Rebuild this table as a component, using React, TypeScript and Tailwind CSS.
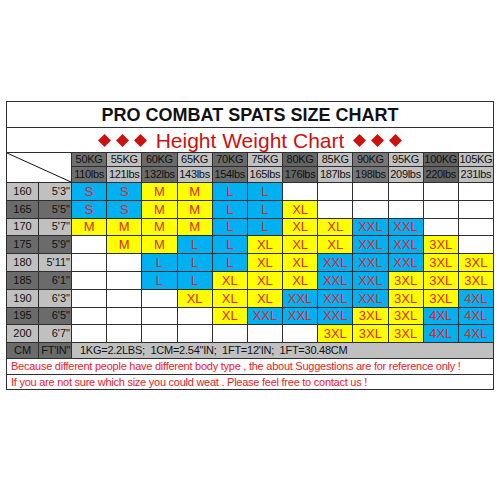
import React from 'react';

const weights = [
  ['50KG', '110lbs'],
  ['55KG', '121lbs'],
  ['60KG', '132lbs'],
  ['65KG', '143lbs'],
  ['70KG', '154lbs'],
  ['75KG', '165lbs'],
  ['80KG', '176lbs'],
  ['85KG', '187lbs'],
  ['90KG', '198lbs'],
  ['95KG', '209lbs'],
  ['100KG', '220lbs'],
  ['105KG', '231lbs'],
];

// header shade per weight column
const headShade = [
  'bg-[#6e6e6e]', 'bg-[#c0c0c0]', 'bg-[#6a6a6a]', 'bg-[#c0c0c0]',
  'bg-[#6a6a6a]', 'bg-[#c0c0c0]', 'bg-[#646464]', 'bg-[#c0c0c0]',
  'bg-[#767676]', 'bg-[#c0c0c0]', 'bg-[#626262]', 'bg-[#c0c0c0]',
];

const sizeRows: [string, string, string][] = [
  ['160', `5'3"`, 'S S M M L L - - - - - -'],
  ['165', `5'5"`, 'S S M M L L XL - - - - -'],
  ['170', `5'7"`, 'M M M M L L XL XL XXL XXL - -'],
  ['175', `5'9"`, '- M M L L XL XL XL XXL XXL 3XL -'],
  ['180', `5'11"`, '- - L L L XL XL XXL XXL XXL 3XL 3XL'],
  ['185', `6'1"`, '- - L L XL XL XL XXL XXL 3XL 3XL 3XL'],
  ['190', `6'3"`, '- - - XL XL XL XXL XXL XXL 3XL 3XL 4XL'],
  ['195', `6'5"`, '- - - - XL XXL XXL XXL 3XL 3XL 4XL 4XL'],
  ['200', `6'7"`, '- - - - - - - 3XL 3XL 3XL 4XL 4XL'],
];

const blue = ['S', 'L', 'XXL', '4XL'];

function Diamonds() {
  return (
    <div className="flex items-center gap-[5px]">
      {[0, 1, 2].map((i) => (
        <svg key={i} width="13" height="13" viewBox="0 0 13 13">
          <path d="M6.5 0 L13 6.5 L6.5 13 L0 6.5 Z" fill="#cc1111" />
        </svg>
      ))}
    </div>
  );
}

export default function App() {
  return (
    <div className="w-[500px] h-[500px] bg-white pt-[101px] pl-[6px]" style={{ fontFamily: '"Liberation Sans", Arial, sans-serif' }}>
      <div className="w-[488px] grid grid-cols-[31px_32px_repeat(12,minmax(0,1fr))] grid-rows-[25px_24px_13px_15px_repeat(9,16.8px)_15px_15px_14px] gap-px bg-[#2e2e2e] border border-[#2e2e2e] text-[#111]">
        {/* Title */}
        <div className="col-span-14 bg-white flex items-center justify-center text-[18px] font-bold leading-none">
          PRO COMBAT SPATS SIZE CHART
        </div>

        {/* Subtitle */}
        <div className="col-span-14 bg-white flex items-center justify-center gap-[9px] text-[#cc1111] leading-none">
          <Diamonds />
          <span className="text-[21px]">Height Weight Chart</span>
          <Diamonds />
        </div>

        {/* Corner cell with diagonal */}
        <div className="col-span-2 row-span-2 bg-white relative">
          <svg className="absolute inset-0 w-full h-full" viewBox="0 0 100 100" preserveAspectRatio="none">
            <line x1="0" y1="0" x2="100" y2="100" stroke="#111" strokeWidth="1" vectorEffect="non-scaling-stroke" />
          </svg>
        </div>

        {weights.map(([kg], i) => (
          <div key={kg} className={`${headShade[i]} flex items-center justify-center text-[11px] tracking-[-0.3px] leading-none whitespace-nowrap`}>
            {kg}
          </div>
        ))}
        {weights.map(([kg, lbs], i) => (
          <div key={kg + lbs} className={`${headShade[i]} flex items-center justify-center text-[11px] tracking-[-0.3px] leading-none whitespace-nowrap`}>
            {lbs}
          </div>
        ))}

        {/* Size rows */}
        {sizeRows.map(([cm, ft, sizes], r) => {
          const shade = r % 2 === 0 ? 'bg-[#c0c0c0]' : 'bg-[#6b6b6b]';
          return (
            <React.Fragment key={cm}>
              <div className={`${shade} flex items-center justify-center text-[11px] leading-none`}>{cm}</div>
              <div className={`${shade} flex items-center justify-end pr-px text-[11px] leading-none`}>{ft}</div>
              {sizes.split(' ').map((s, c) => (
                <div
                  key={c}
                  className={`flex items-center justify-center text-[13px] leading-none text-[#e0262e] ${
                    s === '-' ? 'bg-white' : blue.includes(s) ? 'bg-[#00b0f0]' : 'bg-[#ffff00]'
                  }`}
                >
                  {s === '-' ? '' : s}
                </div>
              ))}
            </React.Fragment>
          );
        })}

        {/* Conversion row */}
        <div className="bg-[#6b6b6b] flex items-center justify-center text-[11px] leading-none">CM</div>
        <div className="bg-[#6b6b6b] flex items-center justify-end pr-px text-[11px] tracking-[-0.3px] leading-none whitespace-nowrap">FT'IN"</div>
        <div className="col-span-12 bg-[#c0c0c0] flex items-center pl-[8px] text-[11px] tracking-[-0.25px] leading-none whitespace-pre">
          {`1KG=2.2LBS;  1CM=2.54"IN;  1FT=12'IN;  1FT=30.48CM`}
        </div>

        {/* Notes */}
        <div className="col-span-14 bg-white flex items-center pl-[4px] text-[11px] tracking-[-0.25px] leading-none whitespace-nowrap text-[#e8202a]">
          Because different people have different body type , the about Suggestions are for reference only !
        </div>
        <div className="col-span-14 bg-white flex items-center pl-[4px] text-[11px] tracking-[-0.25px] leading-none whitespace-nowrap text-[#e8202a]">
          If you are not sure which size you could weat . Please feel free to contact us !
        </div>
      </div>
    </div>
  );
}
